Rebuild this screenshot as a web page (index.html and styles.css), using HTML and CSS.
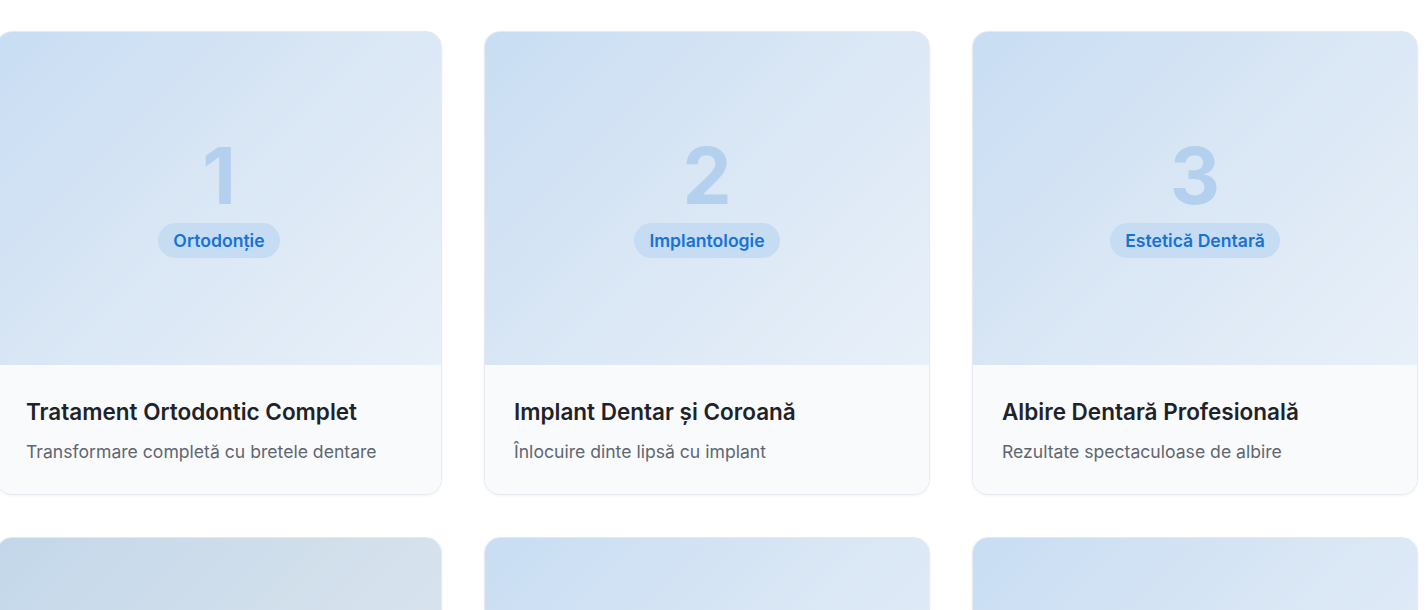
FILE: index.html
```html
<!DOCTYPE html>
<html lang="ro">
<head>
<meta charset="utf-8">
<title>Cazuri</title>
<link rel="stylesheet" href="styles.css">
</head>
<body>
<section class="gallery">
  <div class="grid">
    <article class="card">
      <div class="visual g1">
        <span class="num">1</span>
        <span class="badge">Ortodonție</span>
      </div>
      <div class="body">
        <h3 class="title">Tratament Ortodontic Complet</h3>
        <p class="desc">Transformare completă cu bretele dentare</p>
      </div>
    </article>
    <article class="card">
      <div class="visual g1">
        <span class="num">2</span>
        <span class="badge">Implantologie</span>
      </div>
      <div class="body">
        <h3 class="title">Implant Dentar și Coroană</h3>
        <p class="desc">Înlocuire dinte lipsă cu implant</p>
      </div>
    </article>
    <article class="card">
      <div class="visual g1">
        <span class="num">3</span>
        <span class="badge">Estetică Dentară</span>
      </div>
      <div class="body">
        <h3 class="title">Albire Dentară Profesională</h3>
        <p class="desc">Rezultate spectaculoase de albire</p>
      </div>
    </article>
    <article class="card">
      <div class="visual g2">
        <span class="num">4</span>
        <span class="badge">Protetică</span>
      </div>
      <div class="body">
        <h3 class="title">Reabilitare Protetică</h3>
        <p class="desc">Restaurare completă a zâmbetului</p>
      </div>
    </article>
    <article class="card">
      <div class="visual g1">
        <span class="num">5</span>
        <span class="badge">Endodonție</span>
      </div>
      <div class="body">
        <h3 class="title">Tratament de Canal</h3>
        <p class="desc">Salvarea dintelui natural</p>
      </div>
    </article>
    <article class="card">
      <div class="visual g1">
        <span class="num">6</span>
        <span class="badge">Parodontologie</span>
      </div>
      <div class="body">
        <h3 class="title">Tratament Parodontal</h3>
        <p class="desc">Gingii sănătoase și puternice</p>
      </div>
    </article>
  </div>
</section>
</body>
</html>
```

FILE: styles.css
```css
* { box-sizing: border-box; }

html, body {
  margin: 0;
  padding: 0;
  background: #ffffff;
  font-family: Inter, "Noto Sans", "Liberation Sans", sans-serif;
  overflow: hidden;
}

.gallery {
  padding-top: 31px;
}

.grid {
  display: grid;
  grid-template-columns: repeat(3, 446px);
  column-gap: 42px;
  row-gap: 42px;
  margin-left: -4px;
}

.card {
  border: 1px solid #e6eaf0;
  border-radius: 16px;
  overflow: hidden;
  background: #f8fafc;
  box-shadow: 0 1px 3px rgba(15, 23, 42, 0.05);
}

.visual {
  height: 333px;
  padding-bottom: 2px;
  display: flex;
  flex-direction: column;
  align-items: center;
  justify-content: center;
  gap: 8px;
}

.g1 {
  background: linear-gradient(135deg, #c8ddf3 0%, #dae7f5 50%, #e8f0f9 100%);
}

.g2 {
  background: linear-gradient(135deg, #c3d7ea 0%, #d3e0ec 50%, #e0e8f0 100%);
}

.num {
  font-size: 78px;
  line-height: 1;
  font-weight: 700;
  color: #b3d1ef;
}

.badge {
  display: inline-block;
  padding: 7px 15px;
  border-radius: 999px;
  background: #c6dcf3;
  color: #1872d6;
  font-size: 17.6px;
  line-height: 21px;
  font-weight: 600;
}

.body {
  padding: 32px 28px 29px 29px;
  background: #f8fafc;
}

.title {
  margin: 0;
  font-size: 22.5px;
  line-height: 30px;
  font-weight: 600;
  color: #1f2329;
}

.desc {
  margin: 12px 0 0;
  font-size: 17.6px;
  line-height: 26px;
  color: #5f6670;
}
```
